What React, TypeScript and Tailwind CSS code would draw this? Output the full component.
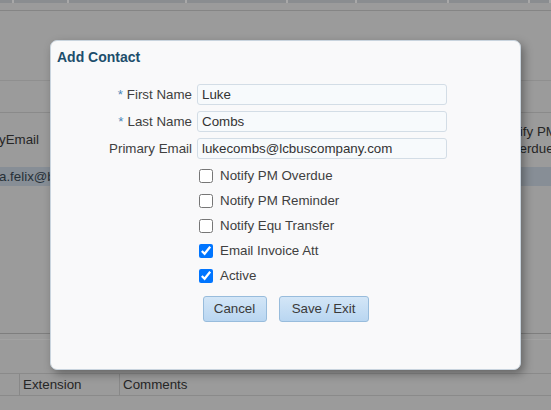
import React from "react";

function Check({ label, checked }: { label: string; checked?: boolean }) {
  return (
    <label className="flex h-[25px] items-center">
      <input
        type="checkbox"
        defaultChecked={checked}
        className="m-0 h-[14px] w-[14px]"
      />
      <span className="ml-[7px] text-[13.33px] text-[#404040]">{label}</span>
    </label>
  );
}

function Field({ label, value, required }: { label: string; value: string; required?: boolean }) {
  return (
    <>
      <div className="flex h-[21px] items-center justify-end text-[13.33px] text-[#404040]">
        {required && <span className="mr-[4px] text-[#4a86b8]">*</span>}
        {label}
      </div>
      <input
        readOnly
        value={value}
        className="h-[21px] w-[250px] rounded-[3px] border border-[#d3dde6] bg-[#f7fafc] px-[4px] text-[13.33px] text-[#333333] outline-none"
      />
    </>
  );
}

export default function App() {
  const topCells = [14, 55, 118, 101, 69, 92, 81, 21];
  return (
    <div className="relative h-[410px] w-[551px] overflow-hidden bg-[#9b9b9b] font-['Liberation_Sans',Arial,sans-serif]">
      {/* background page */}
      <div className="flex flex-col">
        <div className="flex h-[3px] bg-[#8a8d90]">
          {topCells.map((w, i) => (
            <div key={i} style={{ width: w }} className="h-full border-r-[2px] border-[#a8a8a8]" />
          ))}
        </div>
        <div className="h-[7px]" />
        <div className="h-px bg-[#858585]" />
        <div className="h-[69px]" />
        <div className="h-px bg-[#8f8f8f]" />
        <div className="h-[31px]" />
        <div className="h-px bg-[#8a8a8a]" />
        <div className="flex h-[54px] items-center text-[13.33px] text-[#262626]">
          <div className="-ml-[1px] w-[120px]">yEmail</div>
          <div className="flex-1" />
          <div className="-mr-[7px] w-[60px] shrink-0 whitespace-nowrap text-center leading-[17px]">
            Notify PM
            <br />
            Overdue
          </div>
        </div>
        <div className="flex h-[19px] items-center bg-[#878e96] text-[13.33px] text-[#263038]">
          <div className="-ml-[1px]">a.felix@bus.com</div>
        </div>
        <div className="h-[147px]" />
        <div className="h-px bg-[#7e7e7e]" />
        <div className="h-[5px]" />
        <div className="h-px bg-[#a2a2a2]" />
        <div className="h-[33px]" />
        <div className="h-px bg-[#8a8a8a]" />
        <div className="flex h-[21px] items-center text-[13.33px] text-[#262626]">
          <div className="h-full w-[20px] border-r border-[#888888]" />
          <div className="flex h-full w-[100px] items-center border-r border-[#888888] pl-[3px]">Extension</div>
          <div className="pl-[3px]">Comments</div>
        </div>
        <div className="h-px bg-[#8a8a8a]" />
      </div>

      {/* modal */}
      <div className="absolute left-[50px] top-[40px] flex h-[330px] w-[471px] flex-col rounded-[7px] border border-[#c9d4de] bg-[#f9f9fa] shadow-[3px_4px_10px_rgba(0,0,0,0.35)]">
        <div className="pl-[6px] pt-[8px] text-[14px] font-bold leading-[17px] text-[#1d4e6c]">Add Contact</div>
        <div className="mt-[18px] grid grid-cols-[141px_250px] gap-x-[5px] gap-y-[6px]">
          <Field label="First Name" value="Luke" required />
          <Field label="Last Name" value="Combs" required />
          <Field label="Primary Email" value="lukecombs@lcbuscompany.com" />
        </div>
        <div className="ml-[148px] mt-[4px] flex flex-col">
          <Check label="Notify PM Overdue" />
          <Check label="Notify PM Reminder" />
          <Check label="Notify Equ Transfer" />
          <Check label="Email Invoice Att" checked />
          <Check label="Active" checked />
        </div>
        <div className="mt-[8px] flex justify-center gap-[12px]">
          <button className="h-[26px] w-[64px] rounded-[3px] border border-[#98bcdc] bg-gradient-to-b from-[#d3e6f7] to-[#b9d6f1] text-[13.33px] text-[#3a3a3a]">
            Cancel
          </button>
          <button className="h-[26px] w-[90px] rounded-[3px] border border-[#98bcdc] bg-gradient-to-b from-[#d3e6f7] to-[#b9d6f1] text-[13.33px] text-[#3a3a3a]">
            Save / Exit
          </button>
        </div>
      </div>
    </div>
  );
}
